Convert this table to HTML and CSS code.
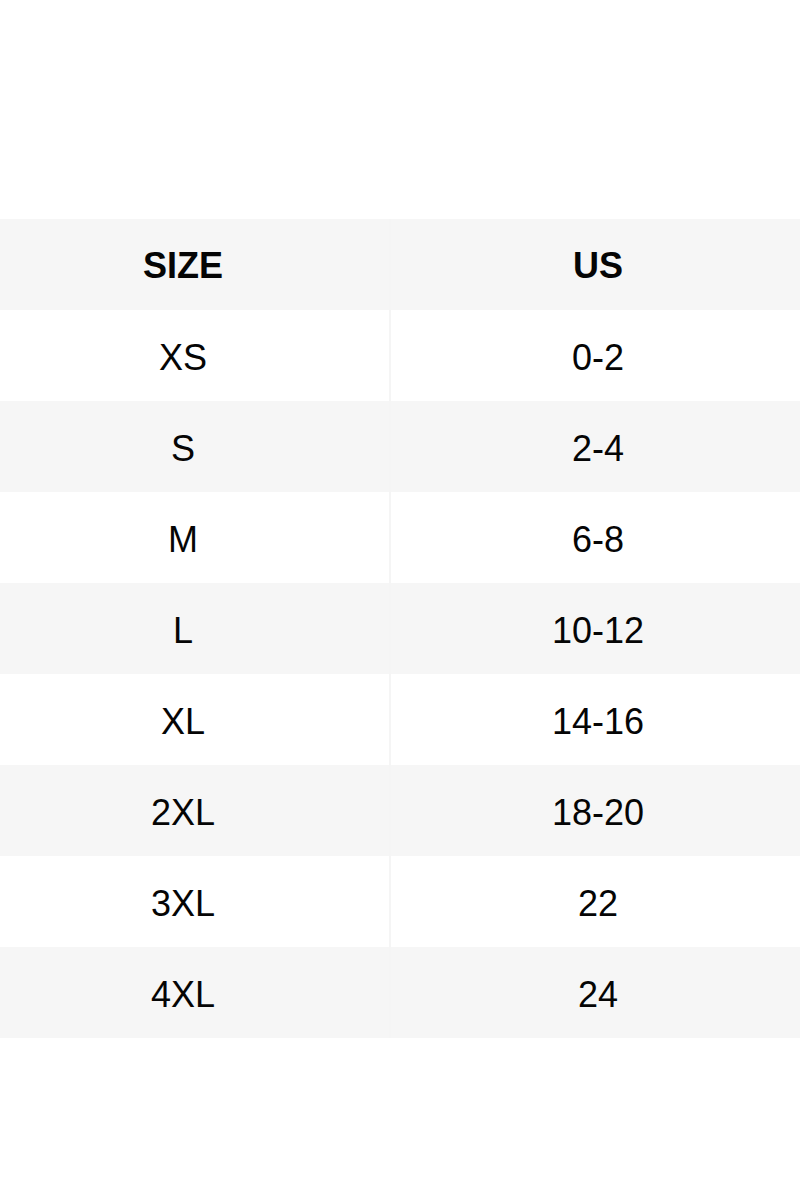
FILE: index.html
```html
<!DOCTYPE html>
<html>
<head>
<meta charset="utf-8">
<link rel="stylesheet" href="styles.css">
</head>
<body>
<div class="page">
  <div class="chart">
    <div class="row head"><div class="cell left">SIZE</div><div class="cell right">US</div></div>
    <div class="row"><div class="cell left">XS</div><div class="cell right">0-2</div></div>
    <div class="row alt"><div class="cell left">S</div><div class="cell right">2-4</div></div>
    <div class="row"><div class="cell left">M</div><div class="cell right">6-8</div></div>
    <div class="row alt"><div class="cell left">L</div><div class="cell right">10-12</div></div>
    <div class="row"><div class="cell left">XL</div><div class="cell right">14-16</div></div>
    <div class="row alt"><div class="cell left">2XL</div><div class="cell right">18-20</div></div>
    <div class="row"><div class="cell left">3XL</div><div class="cell right">22</div></div>
    <div class="row alt"><div class="cell left">4XL</div><div class="cell right">24</div></div>
  </div>
</div>
</body>
</html>
```
FILE: styles.css
```css
html, body {
  margin: 0;
  padding: 0;
  background: #ffffff;
}
body {
  font-family: "Liberation Sans", Arial, Helvetica, sans-serif;
  color: #050505;
}
.page {
  width: 800px;
  height: 1200px;
  padding-top: 219px;
  box-sizing: border-box;
}
.chart {
  display: flex;
  flex-direction: column;
}
.row {
  display: grid;
  grid-template-columns: 389px 2px 1fr;
  height: 91px;
  background: #ffffff;
}
.row::before {
  content: "";
  grid-column: 2;
  grid-row: 1;
  background: #f5f5f5;
}
.row.head, .row.alt {
  background: #f6f6f6;
}
.cell {
  display: flex;
  align-items: center;
  justify-content: center;
  font-size: 36px;
  line-height: 1;
  grid-row: 1;
  padding-top: 4px;
}
.cell.left {
  grid-column: 1;
  padding-right: 23px;
}
.cell.right {
  grid-column: 3;
  padding-left: 5px;
}
.head .cell {
  font-weight: bold;
  padding-top: 3px;
}
```
